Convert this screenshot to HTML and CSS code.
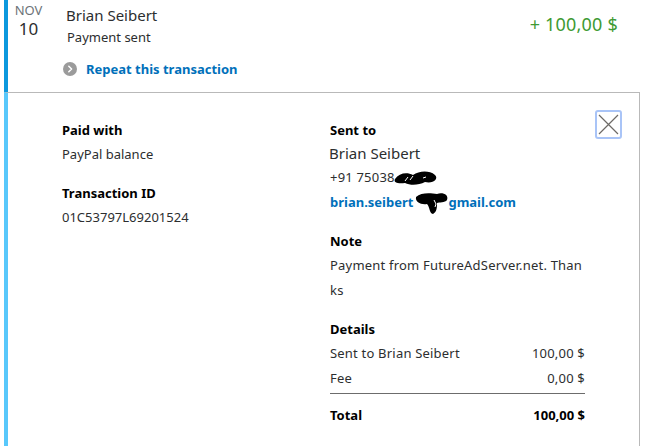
FILE: index.html
```html
<!DOCTYPE html>
<html lang="en">
<head>
  <meta charset="UTF-8">
  <title>Activity</title>
  <link rel="stylesheet" href="styles.css">
</head>
<body>
  <div class="activity">
    <div class="summary">
      <div class="date">
        <span class="month">NOV</span>
        <span class="day">10</span>
      </div>
      <div class="info">
        <div class="name">Brian Seibert</div>
        <div class="status">Payment sent</div>
        <a href="#" class="repeat">
          <span class="chevron">
            <svg width="14" height="14" viewBox="0 0 14 14"><circle cx="7" cy="7" r="7" fill="#9b9b9b"/><path d="M5.8 4.2 8.6 7 5.8 9.8" fill="none" stroke="#fff" stroke-width="1.5" stroke-linecap="round" stroke-linejoin="round"/></svg>
          </span>
          Repeat this transaction
        </a>
      </div>
      <div class="amount">+ 100,00 $</div>
    </div>

    <div class="details">
      <button class="close" type="button" aria-label="Close">
        <svg width="21" height="21" viewBox="0 0 21 21"><path d="M1 1 20 20M20 1 1 20" stroke="#6d6a66" stroke-width="1.2"/></svg>
      </button>

      <div class="col">
        <div class="block">
          <h4>Paid with</h4>
          <p>PayPal balance</p>
        </div>
        <div class="block">
          <h4>Transaction ID</h4>
          <p>01C53797L69201524</p>
        </div>
      </div>

      <div class="col wide">
        <div class="block">
          <h4>Sent to</h4>
          <p class="big">Brian Seibert</p>
          <p class="masked">+91 75038
            <svg class="scribble phone" width="46" height="18" viewBox="0 0 46 18"><path d="M2 10 C6 4 14 3 20 6 C26 2 36 1 42 6 C46 10 40 15 32 13 C26 16 18 17 12 14 C6 15 0 14 2 10Z" fill="#000"/><path d="M12 12 15 8M17 11 20 7M30 9 33 8" stroke="#fff" stroke-width="1"/></svg>
          </p>
          <p class="link">brian.seibert<span class="gap"><svg class="scribble mail" width="34" height="24" viewBox="0 0 34 24"><path d="M1 6 C6 1 16 2 22 3 C28 1 34 4 32 9 C30 12 24 11 22 12 C22 16 22 21 18 23 C14 22 15 16 12 13 C6 14 0 11 1 6Z" fill="#000"/><path d="M19 9 21 13 20 16" stroke="#fff" stroke-width="1" fill="none"/></svg></span>gmail.com</p>
        </div>
        <div class="block">
          <h4>Note</h4>
          <p class="note">Payment from FutureAdServer.net. Thanks</p>
        </div>
        <div class="block">
          <h4>Details</h4>
          <div class="line"><span>Sent to Brian Seibert</span><span>100,00 $</span></div>
          <div class="line"><span>Fee</span><span>0,00 $</span></div>
          <div class="line total"><span>Total</span><span>100,00 $</span></div>
        </div>
      </div>
    </div>
  </div>
</body>
</html>
```

FILE: styles.css
```css
* {
  margin: 0;
  padding: 0;
  box-sizing: border-box;
}

body {
  background: #fff;
  font-family: "Noto Sans", "Open Sans", sans-serif;
  color: #2c2e2f;
  overflow: hidden;
}

.activity {
  margin-left: 4px;
  margin-right: 9px;
}

/* ligne principale */
.summary {
  display: flex;
  height: 92px;
  border-left: 4px solid #0c98dd;
}

.date {
  width: 41px;
  display: flex;
  flex-direction: column;
  align-items: center;
  padding-top: 2px;
  margin-right: 17px;
}

.month {
  font-size: 13px;
  color: #6c7378;
  line-height: 16px;
}

.day {
  font-size: 17px;
  color: #2c2e2f;
  line-height: 18px;
  margin-top: 2px;
}

.info {
  flex: 1;
  padding-top: 5px;
}

.name {
  font-size: 15px;
  line-height: 20px;
}

.status {
  font-size: 13px;
  line-height: 18px;
  margin-top: 3px;
  margin-left: 1px;
}

.repeat {
  display: flex;
  align-items: center;
  gap: 9px;
  margin-top: 14px;
  margin-left: -3px;
  font-size: 13px;
  font-weight: 700;
  color: #0070ba;
  text-decoration: none;
}

.chevron {
  display: flex;
}

.amount {
  font-size: 18px;
  letter-spacing: 0.2px;
  color: #3e9a33;
  padding-top: 12px;
  padding-right: 22px;
}

/* panneau de détails */
.details {
  position: relative;
  display: flex;
  border-left: 4px solid #58c8fb;
  border-top: 1px solid #b9b9b9;
  border-right: 1px solid #b9b9b9;
  padding: 28px 0 20px 54px;
  min-height: 360px;
}

.close {
  position: absolute;
  top: 17px;
  right: 17px;
  width: 27px;
  height: 29px;
  border: 2px solid #a9c4f7;
  border-radius: 3px;
  background: #fff;
  display: flex;
  align-items: center;
  justify-content: center;
}

.col {
  width: 268px;
}

.col.wide {
  width: 255px;
}

.block {
  margin-bottom: 17px;
}

h4 {
  font-size: 13px;
  font-weight: 700;
  color: #000;
  line-height: 18px;
  margin-bottom: 3px;
}

p {
  font-size: 13px;
  line-height: 25px;
}

.wide p,
.line {
  letter-spacing: 0.2px;
}

.wide p.big {
  font-size: 15px;
  line-height: 23px;
  letter-spacing: 0;
  margin-left: -1px;
}

.masked {
  position: relative;
}

.scribble.phone {
  position: absolute;
  left: 63px;
  top: 4px;
}

.wide p.link {
  color: #0070ba;
  font-weight: 700;
  letter-spacing: 0;
  height: 25px;
}

.gap {
  display: inline-block;
  position: relative;
  width: 35px;
  height: 10px;
}

.scribble.mail {
  position: absolute;
  left: 2px;
  top: -6px;
}

.note {
  word-break: break-all;
}

.line {
  display: flex;
  justify-content: space-between;
  font-size: 13px;
  line-height: 25px;
}

.line.total {
  font-weight: 700;
  color: #000;
  letter-spacing: 0;
  border-top: 1px solid #6c6c6c;
  margin-top: 2px;
  padding-top: 9px;
}
```
